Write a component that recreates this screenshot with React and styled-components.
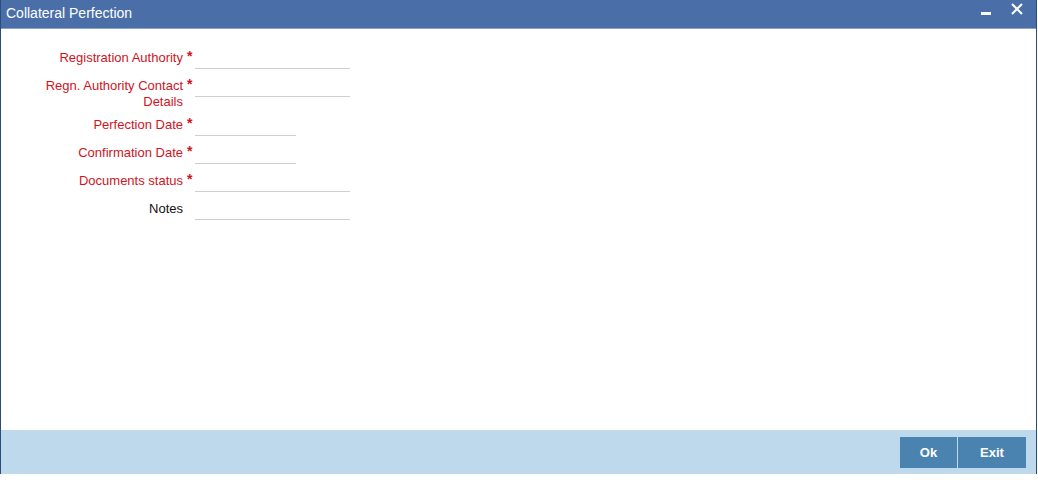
import React from 'react';
import styled, { createGlobalStyle } from 'styled-components';

const GlobalStyle = createGlobalStyle`
  html, body {
    margin: 0;
    padding: 0;
    background: #ffffff;
  }
  body {
    font-family: "Liberation Sans", Arial, sans-serif;
  }
`;

const Window = styled.div`
  width: 1037px;
  height: 474px;
  box-sizing: border-box;
  border-left: 1px solid #2a4b7c;
  border-right: 1px solid #2a4b7c;
  display: flex;
  flex-direction: column;
  background: #ffffff;
`;

const TitleBar = styled.div`
  height: 28px;
  flex: 0 0 auto;
  background: #4a6fa8;
  border-bottom: 1px solid #8da3bd;
  display: flex;
  align-items: flex-start;
  justify-content: space-between;
  padding: 0 13px 0 5px;
`;

const Title = styled.span`
  color: #ffffff;
  font-size: 14px;
  line-height: 16px;
  margin-top: 5px;
`;

const WindowControls = styled.div`
  display: flex;
  align-items: flex-start;
  gap: 20px;
  margin-top: 3px;
`;

const ControlButton = styled.button`
  border: none;
  background: transparent;
  padding: 0;
  width: ${p => p.$width}px;
  height: 12px;
  display: flex;
  align-items: center;
  justify-content: center;
  cursor: pointer;
`;

const Body = styled.div`
  flex: 1 1 auto;
  padding-top: 20px;
  display: flex;
  flex-direction: column;
`;

const FieldRow = styled.div`
  display: flex;
  align-items: flex-start;
  margin-bottom: ${p => p.$gap || 8}px;
`;

const Label = styled.label`
  width: 182px;
  text-align: right;
  font-size: 13px;
  line-height: 16px;
  padding-top: 1px;
  color: ${p => (p.$required ? '#d0141e' : '#111111')};
`;

const Asterisk = styled.span`
  width: 12px;
  padding-left: 4px;
  box-sizing: border-box;
  color: #d0141e;
  font-size: 14px;
  line-height: 14px;
  font-weight: bold;
`;

const Input = styled.input`
  width: ${p => p.$width}px;
  height: 20px;
  box-sizing: border-box;
  border: none;
  border-bottom: 1px solid #cfcfcf;
  outline: none;
  padding: 0 3px;
  font-family: inherit;
  font-size: 13px;
  background: transparent;
`;

const Footer = styled.div`
  height: 44px;
  flex: 0 0 auto;
  background: #bed9ec;
  display: flex;
  justify-content: flex-end;
  align-items: center;
  padding-right: 10px;
  gap: 1px;
`;

const ActionButton = styled.button`
  width: ${p => p.$width}px;
  height: 31px;
  border: none;
  background: #4a83b0;
  color: #ffffff;
  font-family: "Liberation Sans", Arial, sans-serif;
  font-weight: bold;
  font-size: 13px;
  cursor: pointer;
  padding: 0;
`;

const fields = [
  { label: 'Registration Authority', required: true, width: 155, gap: 8 },
  { label: ['Regn. Authority Contact', 'Details'], required: true, width: 155, gap: 6 },
  { label: 'Perfection Date', required: true, width: 101, gap: 8 },
  { label: 'Confirmation Date', required: true, width: 101, gap: 8 },
  { label: 'Documents status', required: true, width: 155, gap: 8 },
  { label: 'Notes', required: false, width: 155, gap: 8 },
];

export default function App() {
  return (
    <>
      <GlobalStyle />
      <Window>
        <TitleBar>
          <Title>Collateral Perfection</Title>
          <WindowControls>
            <ControlButton $width={10} aria-label="minimize">
              <svg width="10" height="12" viewBox="0 0 10 12">
                <rect x="0" y="9" width="10" height="3" fill="#ffffff" />
              </svg>
            </ControlButton>
            <ControlButton $width={12} aria-label="close">
              <svg width="12" height="12" viewBox="0 0 12 12">
                <path d="M1 1 L11 11 M11 1 L1 11" stroke="#ffffff" strokeWidth="2" />
              </svg>
            </ControlButton>
          </WindowControls>
        </TitleBar>
        <Body>
          {fields.map((f, i) => (
            <FieldRow key={i} $gap={f.gap}>
              <Label $required={f.required}>
                {Array.isArray(f.label)
                  ? f.label.map((l, j) => <div key={j}>{l}</div>)
                  : f.label}
              </Label>
              <Asterisk>{f.required ? '*' : ''}</Asterisk>
              <Input $width={f.width} />
            </FieldRow>
          ))}
        </Body>
        <Footer>
          <ActionButton $width={57}>Ok</ActionButton>
          <ActionButton $width={68}>Exit</ActionButton>
        </Footer>
      </Window>
    </>
  );
}
